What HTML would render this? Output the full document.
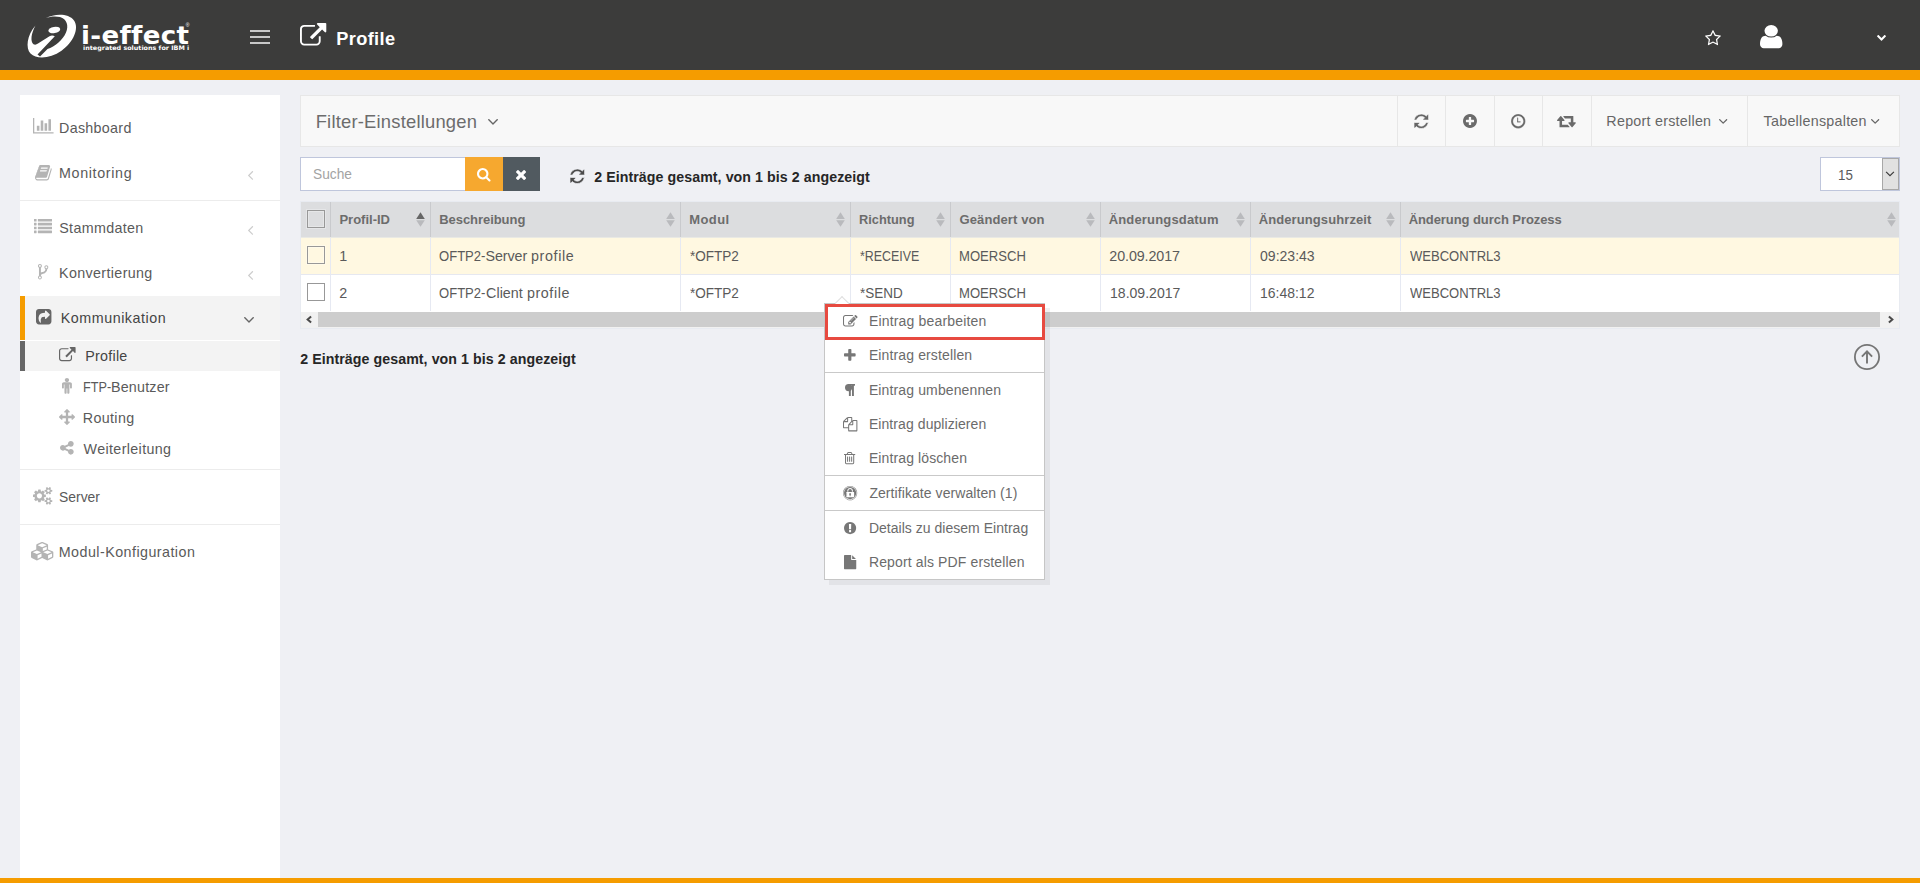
<!DOCTYPE html>
<html lang="de">
<head>
<meta charset="utf-8">
<title>i-effect - Profile</title>
<style>
*{box-sizing:border-box;margin:0;padding:0}
html,body{width:1920px;height:883px;overflow:hidden}
body{background:#eff0f4;font-family:"Liberation Sans",Arial,sans-serif;font-size:14.6px;color:#595959;position:relative;line-height:1}
.abs{position:absolute}
svg.ic{display:block;position:absolute;overflow:visible}
.t{position:absolute;white-space:nowrap;line-height:20px}
.sg{display:inline-block;white-space:pre;vertical-align:top}
.nav{font-size:14.3px;color:#5a5a5a}
.navd{font-size:14.3px;color:#444}
.title{font-size:18.2px;font-weight:bold;color:#fff}
.ft{font-size:18.4px;color:#6c6c6c}
.bt{font-size:14.3px;color:#666}
.ph{font-size:14.3px;color:#a3a3a3}
.cnt{font-size:14.2px;font-weight:bold;color:#262626}
.th{font-size:13px;font-weight:bold;color:#6c6c6c}
.td{font-size:14.3px;color:#5a5a5a}
.mi{font-size:14px;color:#6b6b6b}

/* ---------- header ---------- */
#top{position:absolute;left:0;top:0;width:1920px;height:70px;background:#3c3c3b}
#topbar{position:absolute;left:0;top:70px;width:1920px;height:10px;background:#f59c00}
#bottombar{position:absolute;left:0;top:878px;width:1920px;height:5px;background:#f59c00}
#burger i{position:absolute;left:250px;width:20px;height:2px;background:#c8c8c8;display:block}
#logotext{line-height:1;left:81.4px;top:23.8px;font-family:"DejaVu Sans","Liberation Sans",sans-serif;font-size:24.6px;font-weight:bold;color:#fff;transform-origin:0 0;transform:scaleX(1.06);letter-spacing:.3px}
#logosub{line-height:1;left:82.8px;top:45.1px;font-family:"DejaVu Sans","Liberation Sans",sans-serif;font-size:6.1px;font-weight:bold;color:#fff;transform-origin:0 0;transform:scaleX(1.05)}

/* ---------- sidebar ---------- */
#side{position:absolute;left:20px;top:95px;width:260px;height:783px;background:#fff}
.sep{position:absolute;left:20px;width:260px;height:1px;background:#ececec}
#act1{position:absolute;left:20px;top:296px;width:260px;height:44px;background:#f3f3f3;border-left:5px solid #f59c00}
#act2{position:absolute;left:20px;top:341px;width:260px;height:30px;background:#f3f3f3;border-left:5px solid #666}

/* ---------- toolbar ---------- */
#panel{position:absolute;left:300px;top:95px;width:1600px;height:52px;background:#f8f8f8;border:1px solid #e7e7e7}
.vsep{position:absolute;top:96px;width:1px;height:50px;background:#e7e7e7}

#search{position:absolute;left:300px;top:157px;width:166px;height:34px;background:#fff;border:1px solid #bfc6dc}
#sbtn{position:absolute;left:465px;top:157px;width:38px;height:34px;background:#f6a82f}
#xbtn{position:absolute;left:503px;top:157px;width:37px;height:34px;background:#515a60}
#sel{position:absolute;left:1820px;top:157px;width:80px;height:34px;background:#fff;border:1px solid #bfc6dc}
#selbtn{position:absolute;left:1882px;top:158px;width:17px;height:32px;background:#e1e1e1;border:1px solid #a8a8a8}
/* ---------- table ---------- */
#tblwrap{position:absolute;left:300px;top:201px;width:1600px;height:128px;border:1px solid #e8ebf1}
#thead{position:absolute;left:301px;top:202px;width:1598px;height:35px;background:#dcdddf}
#row1{position:absolute;left:301px;top:238px;width:1598px;height:36px;background:#fff8e1}
#row2{position:absolute;left:301px;top:275px;width:1598px;height:37px;background:#fff}
.hl{position:absolute;left:301px;width:1598px;height:1px;background:#e6e8f0}
.cl{position:absolute;top:202px;width:1px;height:35px;background:#c9cacd}
.cl2{position:absolute;top:238px;width:1px;height:73px;background:#e6e9f2}
.cb{position:absolute;left:307px;width:18px;height:18px;border:1px solid #989898;background:transparent;box-shadow:0 0 0 1px rgba(255,255,255,.28),inset 0 0 0 1px rgba(255,255,255,.3)}
.srt{position:absolute;top:213px;width:9px;height:14px}
#hscroll{position:absolute;left:301px;top:312px;width:1598px;height:16px;background:#f1f1f1}
#hthumb{position:absolute;left:318px;top:312px;width:1562px;height:15px;background:#cdcdcd}

/* ---------- context menu ---------- */
#menu{position:absolute;left:824px;top:303px;width:221px;height:277px;background:#fff;border:1px solid #c6c6c6;box-shadow:5px 5px 0 rgba(40,40,60,.065)}
#menusel{position:absolute;left:825px;top:304px;width:220px;height:36px;border:3px solid #e74a40;background:#fff}
.msep{position:absolute;left:825px;width:219px;height:1px;background:#c9c9c9}
#caret{position:absolute;left:836.8px;top:297.6px;width:10px;height:10px;background:#fff;border-left:1.3px solid #dedede;border-top:1.3px solid #dedede;transform:rotate(45deg)}
</style>
</head>
<body>
<!-- ================= HEADER ================= -->
<div id="top"></div>
<div id="topbar"></div>
<div id="bottombar"></div>
<svg class="abs" style="left:24px;top:12px" width="56" height="48" viewBox="0 0 56 48" aria-hidden="true">
  <path fill="#fff" d="M21.5 6.2 C31 1.5 44.5 1.2 50 8.5 C55.5 16.5 49.5 30 37.5 38.8 C26.5 46.5 13 48 6.5 41.5 C1.5 36 2.8 23.5 11.5 13.5 C7 21.5 6.2 29.5 9.5 32.2 C11 33 12.5 32.6 14 31.6 L25.5 24.2 C27.5 23 29.5 23.5 30.8 24.2 L13.5 42.5 L16 44.5 L23.5 37 C31 34.5 38.5 28.5 42 20.5 C45 13.5 42.8 7 36 5 C31.5 3.8 26 4.4 21.5 6.2 Z"/>
  <ellipse cx="30.3" cy="18" rx="6" ry="3.1" fill="#fff" transform="rotate(-10 30.3 18)"/>
</svg>
<div class="t" id="logotext">i-effect</div>
<div class="t" id="logosub">integrated solutions for IBM i</div>
<div class="t" style="line-height:1;left:185.8px;top:22.9px;font-size:5px;color:#fff">®</div>
<div id="burger"><i style="top:30px"></i><i style="top:36px"></i><i style="top:42px"></i></div>
<svg class="ic" style="left:299.9px;top:22.5px" width="26.3" height="22.54" viewBox="0 -1536 1792 1536" aria-hidden="true"><path fill="#fff" transform="scale(1,-1)" d="M1408 608v-320q0 -119 -84.5 -203.5t-203.5 -84.5h-832q-119 0 -203.5 84.5t-84.5 203.5v832q0 119 84.5 203.5t203.5 84.5h704q14 0 23 -9t9 -23v-64q0 -14 -9 -23t-23 -9h-704q-66 0 -113 -47t-47 -113v-832q0 -66 47 -113t113 -47h832q66 0 113 47t47 113v320 q0 14 9 23t23 9h64q14 0 23 -9t9 -23zM1792 1472v-512q0 -26 -19 -45t-45 -19t-45 19l-176 176l-652 -652q-10 -10 -23 -10t-23 10l-114 114q-10 10 -10 23t10 23l652 652l-176 176q-19 19 -19 45t19 45t45 19h512q26 0 45 -19t19 -45z"/></svg>
<div class="t title" style="left:336.35px;top:29px;letter-spacing:0.342px">Profile</div>
<svg class="ic" style="left:1705px;top:30px" width="15.97" height="15.23" viewBox="0 -1504 1664 1587" aria-hidden="true"><path fill="#fff" transform="scale(1,-1)" d="M1137 532l306 297l-422 62l-189 382l-189 -382l-422 -62l306 -297l-73 -421l378 199l377 -199zM1664 889q0 -22 -26 -48l-363 -354l86 -500q1 -7 1 -20q0 -50 -41 -50q-19 0 -40 12l-449 236l-449 -236q-22 -12 -40 -12q-21 0 -31.5 14.5t-10.5 35.5q0 6 2 20l86 500 l-364 354q-25 27 -25 48q0 37 56 46l502 73l225 455q19 41 49 41t49 -41l225 -455l502 -73q56 -9 56 -46z"/></svg>
<svg class="ic" style="left:1760.2px;top:25px" width="22.4" height="23.2" preserveAspectRatio="none" viewBox="0 -1408 1280 1536" aria-hidden="true"><path fill="#fff" transform="scale(1,-1)" d="M1280 137q0 -109 -62.5 -187t-150.5 -78h-854q-88 0 -150.5 78t-62.5 187q0 85 8.5 160.5t31.5 152t58.5 131t94 89t134.5 34.5q131 -128 313 -128t313 128q76 0 134.5 -34.5t94 -89t58.5 -131t31.5 -152t8.5 -160.5zM1024 1024q0 -159 -112.5 -271.5t-271.5 -112.5 t-271.5 112.5t-112.5 271.5t112.5 271.5t271.5 112.5t271.5 -112.5t112.5 -271.5z"/></svg>
<svg class="ic" style="left:1876.8px;top:34.8px" width="9" height="5.78" viewBox="90 -1003 1612 1035" aria-hidden="true"><path fill="#fff" transform="scale(1,-1)" d="M1683 728l-742 -741q-19 -19 -45 -19t-45 19l-742 741q-19 19 -19 45.5t19 45.5l166 165q19 19 45 19t45 -19l531 -531l531 531q19 19 45 19t45 -19l166 -165q19 -19 19 -45.5t-19 -45.5z"/></svg>

<!-- ================= SIDEBAR ================= -->
<div id="side"></div>
<div class="sep" style="top:200px"></div>
<div class="sep" style="top:469px"></div>
<div class="sep" style="top:524px"></div>
<div id="act1"></div>
<div id="act2"></div>

<svg class="ic" style="left:32.9px;top:118.3px" width="20.57" height="15.43" viewBox="0 -1408 2048 1536" aria-hidden="true"><path fill="#b4b4b4" transform="scale(1,-1)" d="M640 640v-512h-256v512h256zM1024 1152v-1024h-256v1024h256zM2048 0v-128h-2048v1536h128v-1408h1920zM1408 896v-768h-256v768h256zM1792 1280v-1152h-256v1152h256z"/></svg>
<div class="t nav" style="left:59.05px;top:118px;letter-spacing:0.294px">Dashboard</div>
<svg class="ic" style="left:35px;top:165px" width="16.73" height="15.43" viewBox="-0.52 -1408 1665.33 1536" aria-hidden="true"><path fill="#b4b4b4" transform="scale(1,-1)" d="M1639 1058q40 -57 18 -129l-275 -906q-19 -64 -76.5 -107.5t-122.5 -43.5h-923q-77 0 -148.5 53.5t-99.5 131.5q-24 67 -2 127q0 4 3 27t4 37q1 8 -3 21.5t-3 19.5q2 11 8 21t16.5 23.5t16.5 23.5q23 38 45 91.5t30 91.5q3 10 0.5 30t-0.5 28q3 11 17 28t17 23 q21 36 42 92t25 90q1 9 -2.5 32t0.5 28q4 13 22 30.5t22 22.5q19 26 42.5 84.5t27.5 96.5q1 8 -3 25.5t-2 26.5q2 8 9 18t18 23t17 21q8 12 16.5 30.5t15 35t16 36t19.5 32t26.5 23.5t36 11.5t47.5 -5.5l-1 -3q38 9 51 9h761q74 0 114 -56t18 -130l-274 -906 q-36 -119 -71.5 -153.5t-128.5 -34.5h-869q-27 0 -38 -15q-11 -16 -1 -43q24 -70 144 -70h923q29 0 56 15.5t35 41.5l300 987q7 22 5 57q38 -15 59 -43zM575 1056q-4 -13 2 -22.5t20 -9.5h608q13 0 25.5 9.5t16.5 22.5l21 64q4 13 -2 22.5t-20 9.5h-608q-13 0 -25.5 -9.5 t-16.5 -22.5zM492 800q-4 -13 2 -22.5t20 -9.5h608q13 0 25.5 9.5t16.5 22.5l21 64q4 13 -2 22.5t-20 9.5h-608q-13 0 -25.5 -9.5t-16.5 -22.5z"/></svg>
<div class="t nav" style="left:59.05px;top:163px;letter-spacing:0.644px">Monitoring</div>
<svg class="ic" style="left:248.4px;top:170.6px" width="5.2" height="8.91" viewBox="45 -1075 582 998" aria-hidden="true"><path fill="#cdcdcd" transform="scale(1,-1)" d="M627 992q0 -13 -10 -23l-393 -393l393 -393q10 -10 10 -23t-10 -23l-50 -50q-10 -10 -23 -10t-23 10l-466 466q-10 10 -10 23t10 23l466 466q10 10 23 10t23 -10l50 -50q10 -10 10 -23z"/></svg>
<svg class="ic" style="left:34px;top:219px" width="18" height="14.14" viewBox="0 -1408 1792 1408" aria-hidden="true"><path fill="#b4b4b4" transform="scale(1,-1)" d="M256 224v-192q0 -13 -9.5 -22.5t-22.5 -9.5h-192q-13 0 -22.5 9.5t-9.5 22.5v192q0 13 9.5 22.5t22.5 9.5h192q13 0 22.5 -9.5t9.5 -22.5zM256 608v-192q0 -13 -9.5 -22.5t-22.5 -9.5h-192q-13 0 -22.5 9.5t-9.5 22.5v192q0 13 9.5 22.5t22.5 9.5h192q13 0 22.5 -9.5 t9.5 -22.5zM256 992v-192q0 -13 -9.5 -22.5t-22.5 -9.5h-192q-13 0 -22.5 9.5t-9.5 22.5v192q0 13 9.5 22.5t22.5 9.5h192q13 0 22.5 -9.5t9.5 -22.5zM1792 224v-192q0 -13 -9.5 -22.5t-22.5 -9.5h-1344q-13 0 -22.5 9.5t-9.5 22.5v192q0 13 9.5 22.5t22.5 9.5h1344 q13 0 22.5 -9.5t9.5 -22.5zM256 1376v-192q0 -13 -9.5 -22.5t-22.5 -9.5h-192q-13 0 -22.5 9.5t-9.5 22.5v192q0 13 9.5 22.5t22.5 9.5h192q13 0 22.5 -9.5t9.5 -22.5zM1792 608v-192q0 -13 -9.5 -22.5t-22.5 -9.5h-1344q-13 0 -22.5 9.5t-9.5 22.5v192q0 13 9.5 22.5 t22.5 9.5h1344q13 0 22.5 -9.5t9.5 -22.5zM1792 992v-192q0 -13 -9.5 -22.5t-22.5 -9.5h-1344q-13 0 -22.5 9.5t-9.5 22.5v192q0 13 9.5 22.5t22.5 9.5h1344q13 0 22.5 -9.5t9.5 -22.5zM1792 1376v-192q0 -13 -9.5 -22.5t-22.5 -9.5h-1344q-13 0 -22.5 9.5t-9.5 22.5v192 q0 13 9.5 22.5t22.5 9.5h1344q13 0 22.5 -9.5t9.5 -22.5z"/></svg>
<div class="t nav" style="left:59.25px;top:218px;letter-spacing:0.322px">Stammdaten</div>
<svg class="ic" style="left:248.4px;top:225.7px" width="5.2" height="8.91" viewBox="45 -1075 582 998" aria-hidden="true"><path fill="#cdcdcd" transform="scale(1,-1)" d="M627 992q0 -13 -10 -23l-393 -393l393 -393q10 -10 10 -23t-10 -23l-50 -50q-10 -10 -23 -10t-23 10l-466 466q-10 10 -10 23t10 23l466 466q10 10 23 10t23 -10l50 -50q10 -10 10 -23z"/></svg>
<svg class="ic" style="left:38px;top:264px" width="10.29" height="15.43" viewBox="0 -1408 1024 1536" aria-hidden="true"><path fill="#b4b4b4" transform="scale(1,-1)" d="M288 64q0 40 -28 68t-68 28t-68 -28t-28 -68t28 -68t68 -28t68 28t28 68zM288 1216q0 40 -28 68t-68 28t-68 -28t-28 -68t28 -68t68 -28t68 28t28 68zM928 1088q0 40 -28 68t-68 28t-68 -28t-28 -68t28 -68t68 -28t68 28t28 68zM1024 1088q0 -52 -26 -96.5t-70 -69.5 q-2 -287 -226 -414q-67 -38 -203 -81q-128 -40 -169.5 -71t-41.5 -100v-26q44 -25 70 -69.5t26 -96.5q0 -80 -56 -136t-136 -56t-136 56t-56 136q0 52 26 96.5t70 69.5v820q-44 25 -70 69.5t-26 96.5q0 80 56 136t136 56t136 -56t56 -136q0 -52 -26 -96.5t-70 -69.5v-497 q54 26 154 57q55 17 87.5 29.5t70.5 31t59 39.5t40.5 51t28 69.5t8.5 91.5q-44 25 -70 69.5t-26 96.5q0 80 56 136t136 56t136 -56t56 -136z"/></svg>
<div class="t nav" style="left:59.05px;top:263px;letter-spacing:0.354px">Konvertierung</div>
<svg class="ic" style="left:248.4px;top:270.8px" width="5.2" height="8.91" viewBox="45 -1075 582 998" aria-hidden="true"><path fill="#cdcdcd" transform="scale(1,-1)" d="M627 992q0 -13 -10 -23l-393 -393l393 -393q10 -10 10 -23t-10 -23l-50 -50q-10 -10 -23 -10t-23 10l-466 466q-10 10 -10 23t10 23l466 466q10 10 23 10t23 -10l50 -50q10 -10 10 -23z"/></svg>
<svg class="ic" style="left:36px;top:308.8px" width="15.43" height="15.43" viewBox="0 -1408 1536 1536" aria-hidden="true"><path fill="#666" transform="scale(1,-1)" d="M1005 435l352 352q19 19 19 45t-19 45l-352 352q-30 31 -69 14q-40 -17 -40 -59v-160q-119 0 -216 -19.5t-162.5 -51t-114 -79t-76.5 -95.5t-44.5 -109t-21.5 -111.5t-5 -110.5q0 -181 167 -404q11 -12 25 -12q7 0 13 3q22 9 19 33q-44 354 62 473q46 52 130 75.5 t224 23.5v-160q0 -42 40 -59q12 -5 24 -5q26 0 45 19zM1536 1120v-960q0 -119 -84.5 -203.5t-203.5 -84.5h-960q-119 0 -203.5 84.5t-84.5 203.5v960q0 119 84.5 203.5t203.5 84.5h960q119 0 203.5 -84.5t84.5 -203.5z"/></svg>
<div class="t navd" style="left:60.75px;top:308px;letter-spacing:0.529px">Kommunikation</div>
<svg class="ic" style="left:244.4px;top:316.9px" width="10.02" height="5.85" viewBox="77 -883 998 582" aria-hidden="true"><path fill="#666" transform="scale(1,-1)" d="M1075 800q0 -13 -10 -23l-466 -466q-10 -10 -23 -10t-23 10l-466 466q-10 10 -10 23t10 23l50 50q10 10 23 10t23 -10l393 -393l393 393q10 10 23 10t23 -10l50 -50q10 -10 10 -23z"/></svg>

<svg class="ic" style="left:58.9px;top:347.2px" width="16.6" height="14.23" viewBox="0 -1536 1792 1536" aria-hidden="true"><path fill="#666" transform="scale(1,-1)" d="M1408 608v-320q0 -119 -84.5 -203.5t-203.5 -84.5h-832q-119 0 -203.5 84.5t-84.5 203.5v832q0 119 84.5 203.5t203.5 84.5h704q14 0 23 -9t9 -23v-64q0 -14 -9 -23t-23 -9h-704q-66 0 -113 -47t-47 -113v-832q0 -66 47 -113t113 -47h832q66 0 113 47t47 113v320 q0 14 9 23t23 9h64q14 0 23 -9t9 -23zM1792 1472v-512q0 -26 -19 -45t-45 -19t-45 19l-176 176l-652 -652q-10 -10 -23 -10t-23 10l-114 114q-10 10 -10 23t10 23l652 652l-176 176q-19 19 -19 45t19 45t45 19h512q26 0 45 -19t19 -45z"/></svg>
<div class="t navd" style="left:85.25px;top:345.7px;letter-spacing:0.258px">Profile</div>
<svg class="ic" style="left:62.1px;top:378.4px" width="9.9" height="15.7" preserveAspectRatio="none" viewBox="0 -1504 1024 1760" aria-hidden="true"><path fill="#b4b4b4" transform="scale(1,-1)" d="M1024 832v-416q0 -40 -28 -68t-68 -28t-68 28t-28 68v352h-64v-912q0 -46 -33 -79t-79 -33t-79 33t-33 79v464h-64v-464q0 -46 -33 -79t-79 -33t-79 33t-33 79v912h-64v-352q0 -40 -28 -68t-68 -28t-68 28t-28 68v416q0 80 56 136t136 56h640q80 0 136 -56t56 -136z M736 1280q0 -93 -65.5 -158.5t-158.5 -65.5t-158.5 65.5t-65.5 158.5t65.5 158.5t158.5 65.5t158.5 -65.5t65.5 -158.5z"/></svg>
<div class="t nav" style="left:82.89px;top:377px"><span class="sg" style="width:28.06px;transform:scaleX(0.8867);transform-origin:0 50%">FTP-</span><span class="sg" style="letter-spacing:0.207px">Benutzer</span></div>
<svg class="ic" style="left:58.6px;top:409.2px" width="16" height="16" viewBox="0 -1536 1792 1792" aria-hidden="true"><path fill="#b4b4b4" transform="scale(1,-1)" d="M1792 640q0 -26 -19 -45l-256 -256q-19 -19 -45 -19t-45 19t-19 45v128h-384v-384h128q26 0 45 -19t19 -45t-19 -45l-256 -256q-19 -19 -45 -19t-45 19l-256 256q-19 19 -19 45t19 45t45 19h128v384h-384v-128q0 -26 -19 -45t-45 -19t-45 19l-256 256q-19 19 -19 45 t19 45l256 256q19 19 45 19t45 -19t19 -45v-128h384v384h-128q-26 0 -45 19t-19 45t19 45l256 256q19 19 45 19t45 -19l256 -256q19 -19 19 -45t-19 -45t-45 -19h-128v-384h384v128q0 26 19 45t45 19t45 -19l256 -256q19 -19 19 -45z"/></svg>
<div class="t nav" style="left:82.75px;top:408px;letter-spacing:0.350px">Routing</div>
<svg class="ic" style="left:59.8px;top:441.3px" width="13.71" height="13.71" viewBox="0 -1408 1536 1536" aria-hidden="true"><path fill="#b4b4b4" transform="scale(1,-1)" d="M1216 512q133 0 226.5 -93.5t93.5 -226.5t-93.5 -226.5t-226.5 -93.5t-226.5 93.5t-93.5 226.5q0 12 2 34l-360 180q-92 -86 -218 -86q-133 0 -226.5 93.5t-93.5 226.5t93.5 226.5t226.5 93.5q126 0 218 -86l360 180q-2 22 -2 34q0 133 93.5 226.5t226.5 93.5 t226.5 -93.5t93.5 -226.5t-93.5 -226.5t-226.5 -93.5q-126 0 -218 86l-360 -180q2 -22 2 -34t-2 -34l360 -180q92 86 218 86z"/></svg>
<div class="t nav" style="left:83.6px;top:439px;letter-spacing:0.354px">Weiterleitung</div>

<svg class="ic" style="left:33px;top:486.8px" width="19.29" height="17.69" viewBox="0 -1520 1920 1761" aria-hidden="true"><path fill="#b4b4b4" transform="scale(1,-1)" d="M896 640q0 106 -75 181t-181 75t-181 -75t-75 -181t75 -181t181 -75t181 75t75 181zM1664 128q0 52 -38 90t-90 38t-90 -38t-38 -90q0 -53 37.5 -90.5t90.5 -37.5t90.5 37.5t37.5 90.5zM1664 1152q0 52 -38 90t-90 38t-90 -38t-38 -90q0 -53 37.5 -90.5t90.5 -37.5 t90.5 37.5t37.5 90.5zM1280 731v-185q0 -10 -7 -19.5t-16 -10.5l-155 -24q-11 -35 -32 -76q34 -48 90 -115q7 -11 7 -20q0 -12 -7 -19q-23 -30 -82.5 -89.5t-78.5 -59.5q-11 0 -21 7l-115 90q-37 -19 -77 -31q-11 -108 -23 -155q-7 -24 -30 -24h-186q-11 0 -20 7.5t-10 17.5 l-23 153q-34 10 -75 31l-118 -89q-7 -7 -20 -7q-11 0 -21 8q-144 133 -144 160q0 9 7 19q10 14 41 53t47 61q-23 44 -35 82l-152 24q-10 1 -17 9.5t-7 19.5v185q0 10 7 19.5t16 10.5l155 24q11 35 32 76q-34 48 -90 115q-7 11 -7 20q0 12 7 20q22 30 82 89t79 59q11 0 21 -7 l115 -90q34 18 77 32q11 108 23 154q7 24 30 24h186q11 0 20 -7.5t10 -17.5l23 -153q34 -10 75 -31l118 89q8 7 20 7q11 0 21 -8q144 -133 144 -160q0 -8 -7 -19q-12 -16 -42 -54t-45 -60q23 -48 34 -82l152 -23q10 -2 17 -10.5t7 -19.5zM1920 198v-140q0 -16 -149 -31 q-12 -27 -30 -52q51 -113 51 -138q0 -4 -4 -7q-122 -71 -124 -71q-8 0 -46 47t-52 68q-20 -2 -30 -2t-30 2q-14 -21 -52 -68t-46 -47q-2 0 -124 71q-4 3 -4 7q0 25 51 138q-18 25 -30 52q-149 15 -149 31v140q0 16 149 31q13 29 30 52q-51 113 -51 138q0 4 4 7q4 2 35 20 t59 34t30 16q8 0 46 -46.5t52 -67.5q20 2 30 2t30 -2q51 71 92 112l6 2q4 0 124 -70q4 -3 4 -7q0 -25 -51 -138q17 -23 30 -52q149 -15 149 -31zM1920 1222v-140q0 -16 -149 -31q-12 -27 -30 -52q51 -113 51 -138q0 -4 -4 -7q-122 -71 -124 -71q-8 0 -46 47t-52 68 q-20 -2 -30 -2t-30 2q-14 -21 -52 -68t-46 -47q-2 0 -124 71q-4 3 -4 7q0 25 51 138q-18 25 -30 52q-149 15 -149 31v140q0 16 149 31q13 29 30 52q-51 113 -51 138q0 4 4 7q4 2 35 20t59 34t30 16q8 0 46 -46.5t52 -67.5q20 2 30 2t30 -2q51 71 92 112l6 2q4 0 124 -70 q4 -3 4 -7q0 -25 -51 -138q17 -23 30 -52q149 -15 149 -31z"/></svg>
<div class="t nav" style="left:59.27px;top:487px;transform:scaleX(0.9721);transform-origin:0 50%">Server</div>
<svg class="ic" style="left:31.3px;top:541.8px" width="22.34" height="18.4" viewBox="0 -1536 2176 1792" aria-hidden="true"><path fill="#b4b4b4" transform="scale(1,-1)" d="M640 -96l384 192v314l-384 -164v-342zM576 358l404 173l-404 173l-404 -173zM1664 -96l384 192v314l-384 -164v-342zM1600 358l404 173l-404 173l-404 -173zM1152 651l384 165v266l-384 -164v-267zM1088 1030l441 189l-441 189l-441 -189zM2176 512v-416q0 -36 -19 -67 t-52 -47l-448 -224q-25 -14 -57 -14t-57 14l-448 224q-4 2 -7 4q-2 -2 -7 -4l-448 -224q-25 -14 -57 -14t-57 14l-448 224q-33 16 -52 47t-19 67v416q0 38 21.5 70t56.5 48l434 186v400q0 38 21.5 70t56.5 48l448 192q23 10 50 10t50 -10l448 -192q35 -16 56.5 -48t21.5 -70 v-400l434 -186q36 -16 57 -48t21 -70z"/></svg>
<div class="t nav" style="left:58.75px;top:542px;letter-spacing:0.453px">Modul-Konfiguration</div>
<!-- ================= TOOLBAR ================= -->
<div id="panel"></div>
<div class="t ft" style="left:315.7px;top:111.6px;letter-spacing:0.203px">Filter-Einstellungen</div>
<svg class="ic" style="left:487.8px;top:119.1px" width="10.02" height="5.85" viewBox="77 -883 998 582" aria-hidden="true"><path fill="#666" transform="scale(1,-1)" d="M1075 800q0 -13 -10 -23l-466 -466q-10 -10 -23 -10t-23 10l-466 466q-10 10 -10 23t10 23l50 50q10 10 23 10t23 -10l393 -393l393 393q10 10 23 10t23 -10l50 -50q10 -10 10 -23z"/></svg>
<div class="vsep" style="left:1397px"></div>
<div class="vsep" style="left:1445px"></div>
<div class="vsep" style="left:1494px"></div>
<div class="vsep" style="left:1542px"></div>
<div class="vsep" style="left:1591px"></div>
<div class="vsep" style="left:1747px"></div>
<svg class="ic" style="left:1414px;top:113.6px" width="14.57" height="14.57" viewBox="0 -1408 1536 1536" aria-hidden="true"><path fill="#666" stroke="#f8f8f8" stroke-width="70" stroke-linejoin="miter" transform="scale(1,-1)" d="M1511 480q0 -5 -1 -7q-64 -268 -268 -434.5t-478 -166.5q-146 0 -282.5 55t-243.5 157l-129 -129q-19 -19 -45 -19t-45 19t-19 45v448q0 26 19 45t45 19h448q26 0 45 -19t19 -45t-19 -45l-137 -137q71 -66 161 -102t187 -36q134 0 250 65t186 179q11 17 53 117 q8 23 30 23h192q13 0 22.5 -9.5t9.5 -22.5zM1536 1280v-448q0 -26 -19 -45t-45 -19h-448q-26 0 -45 19t-19 45t19 45l138 138q-148 137 -349 137q-134 0 -250 -65t-186 -179q-11 -17 -53 -117q-8 -23 -30 -23h-199q-13 0 -22.5 9.5t-9.5 22.5v7q65 268 270 434.5t480 166.5 q146 0 284 -55.5t245 -156.5l130 129q19 19 45 19t45 -19t19 -45z"/></svg>
<svg class="ic" style="left:1463px;top:113.9px" width="13.97" height="13.97" viewBox="0 -1408 1536 1536" aria-hidden="true"><path fill="#6b6b6b" transform="scale(1,-1)" d="M1216 576v128q0 26 -19 45t-45 19h-256v256q0 26 -19 45t-45 19h-128q-26 0 -45 -19t-19 -45v-256h-256q-26 0 -45 -19t-19 -45v-128q0 -26 19 -45t45 -19h256v-256q0 -26 19 -45t45 -19h128q26 0 45 19t19 45v256h256q26 0 45 19t19 45zM1536 640q0 -209 -103 -385.5 t-279.5 -279.5t-385.5 -103t-385.5 103t-279.5 279.5t-103 385.5t103 385.5t279.5 279.5t385.5 103t385.5 -103t279.5 -279.5t103 -385.5z"/></svg>
<svg class="ic" style="left:1511.1px;top:113.7px" width="14.4" height="14.4" viewBox="0 -1408 1536 1536" aria-hidden="true"><path fill="#666" stroke="#f8f8f8" stroke-width="28" stroke-linejoin="miter" transform="translate(1536,0) scale(-1,-1)" d="M896 992v-448q0 -14 -9 -23t-23 -9h-320q-14 0 -23 9t-9 23v64q0 14 9 23t23 9h224v352q0 14 9 23t23 9h64q14 0 23 -9t9 -23zM1312 640q0 148 -73 273t-198 198t-273 73t-273 -73t-198 -198t-73 -273t73 -273t198 -198t273 -73t273 73t198 198t73 273zM1536 640 q0 -209 -103 -385.5t-279.5 -279.5t-385.5 -103t-385.5 103t-279.5 279.5t-103 385.5t103 385.5t279.5 279.5t385.5 103t385.5 -103t279.5 -279.5t103 -385.5z"/></svg>
<svg class="ic" style="left:1557.4px;top:115.8px" width="18.86" height="11.31" viewBox="0 -1152 1920 1152" aria-hidden="true"><path fill="#6b6b6b" transform="scale(1,-1)" d="M1280 32q0 -13 -9.5 -22.5t-22.5 -9.5h-960q-8 0 -13.5 2t-9 7t-5.5 8t-3 11.5t-1 11.5v13v11v160v416h-192q-26 0 -45 19t-19 45q0 24 15 41l320 384q19 22 49 22t49 -22l320 -384q15 -17 15 -41q0 -26 -19 -45t-45 -19h-192v-384h576q16 0 25 -11l160 -192q7 -10 7 -21 zM1920 448q0 -24 -15 -41l-320 -384q-20 -23 -49 -23t-49 23l-320 384q-15 17 -15 41q0 26 19 45t45 19h192v384h-576q-16 0 -25 12l-160 192q-7 9 -7 20q0 13 9.5 22.5t22.5 9.5h960q8 0 13.5 -2t9 -7t5.5 -8t3 -11.5t1 -11.5v-13v-11v-160v-416h192q26 0 45 -19t19 -45z"/></svg>
<div class="t bt" style="left:1606.35px;top:111.2px;letter-spacing:0.253px">Report erstellen</div>
<svg class="ic" style="left:1719.3px;top:118.9px" width="8.35" height="4.87" viewBox="77 -883 998 582" aria-hidden="true"><path fill="#666" transform="scale(1,-1)" d="M1075 800q0 -13 -10 -23l-466 -466q-10 -10 -23 -10t-23 10l-466 466q-10 10 -10 23t10 23l50 50q10 10 23 10t23 -10l393 -393l393 393q10 10 23 10t23 -10l50 -50q10 -10 10 -23z"/></svg>
<div class="t bt" style="left:1763.6px;top:111.2px;letter-spacing:0.254px">Tabellenspalten</div>
<svg class="ic" style="left:1871.3px;top:118.9px" width="8.35" height="4.87" viewBox="77 -883 998 582" aria-hidden="true"><path fill="#666" transform="scale(1,-1)" d="M1075 800q0 -13 -10 -23l-466 -466q-10 -10 -23 -10t-23 10l-466 466q-10 10 -10 23t10 23l50 50q10 10 23 10t23 -10l393 -393l393 393q10 10 23 10t23 -10l50 -50q10 -10 10 -23z"/></svg>

<div id="search"></div>
<div class="t ph" style="left:312.98px;top:164px;transform:scaleX(0.9605);transform-origin:0 50%">Suche</div>
<div id="sbtn"></div>
<div id="xbtn"></div>
<svg class="ic" style="left:477.4px;top:167.8px" width="13.56" height="13.56" viewBox="0 -1408 1664 1664" aria-hidden="true"><path fill="#fff" transform="scale(1,-1)" d="M1152 704q0 185 -131.5 316.5t-316.5 131.5t-316.5 -131.5t-131.5 -316.5t131.5 -316.5t316.5 -131.5t316.5 131.5t131.5 316.5zM1664 -128q0 -52 -38 -90t-90 -38q-54 0 -90 38l-343 342q-179 -124 -399 -124q-143 0 -273.5 55.5t-225 150t-150 225t-55.5 273.5 t55.5 273.5t150 225t225 150t273.5 55.5t273.5 -55.5t225 -150t150 -225t55.5 -273.5q0 -220 -124 -399l343 -343q37 -37 37 -90z"/></svg>
<svg class="ic" style="left:516.2px;top:169.5px" width="10.08" height="10.08" viewBox="110 -1170 1188 1188" aria-hidden="true"><path fill="#fff" transform="scale(1,-1)" d="M1298 214q0 -40 -28 -68l-136 -136q-28 -28 -68 -28t-68 28l-294 294l-294 -294q-28 -28 -68 -28t-68 28l-136 136q-28 28 -28 68t28 68l294 294l-294 294q-28 28 -28 68t28 68l136 136q28 28 68 28t68 -28l294 -294l294 294q28 28 68 28t68 -28l136 -136q28 -28 28 -68 t-28 -68l-294 -294l294 -294q28 -28 28 -68z"/></svg>
<svg class="ic" style="left:569.9px;top:168.5px" width="14.57" height="14.57" viewBox="0 -1408 1536 1536" aria-hidden="true"><path fill="#4a4a4a" stroke="#eff0f4" stroke-width="70" stroke-linejoin="miter" transform="scale(1,-1)" d="M1511 480q0 -5 -1 -7q-64 -268 -268 -434.5t-478 -166.5q-146 0 -282.5 55t-243.5 157l-129 -129q-19 -19 -45 -19t-45 19t-19 45v448q0 26 19 45t45 19h448q26 0 45 -19t19 -45t-19 -45l-137 -137q71 -66 161 -102t187 -36q134 0 250 65t186 179q11 17 53 117 q8 23 30 23h192q13 0 22.5 -9.5t9.5 -22.5zM1536 1280v-448q0 -26 -19 -45t-45 -19h-448q-26 0 -45 19t-19 45t19 45l138 138q-148 137 -349 137q-134 0 -250 -65t-186 -179q-11 -17 -53 -117q-8 -23 -30 -23h-199q-13 0 -22.5 9.5t-9.5 22.5v7q65 268 270 434.5t480 166.5 q146 0 284 -55.5t245 -156.5l130 129q19 19 45 19t45 -19t19 -45z"/></svg>
<div class="t cnt" style="left:594.2px;top:167.2px;letter-spacing:0.071px">2 Einträge gesamt, von 1 bis 2 angezeigt</div>
<div id="sel"></div>
<div class="t td" style="left:1837.67px;top:165px;transform:scaleX(0.9333);transform-origin:0 50%">15</div>
<div id="selbtn"></div>
<svg class="abs" style="left:1885px;top:170px" width="10" height="7" viewBox="0 0 10 7" aria-hidden="true"><path d="M1.1 1.8 L5 5.6 L8.9 1.8" fill="none" stroke="#3a3a3a" stroke-width="1.15"/></svg>

<!-- ================= TABLE ================= -->
<div id="tblwrap"></div>
<div id="thead"></div>
<div id="row1"></div>
<div id="row2"></div>
<div class="hl" style="top:237px;background:#e9e9e4"></div>
<div class="hl" style="top:274px"></div>
<div class="cl" style="left:330px"></div><div class="cl" style="left:430px"></div><div class="cl" style="left:680px"></div><div class="cl" style="left:850px"></div><div class="cl" style="left:950px"></div><div class="cl" style="left:1100px"></div><div class="cl" style="left:1250px"></div><div class="cl" style="left:1400px"></div>
<div class="cl2" style="left:330px"></div><div class="cl2" style="left:430px"></div><div class="cl2" style="left:680px"></div><div class="cl2" style="left:850px"></div><div class="cl2" style="left:950px"></div><div class="cl2" style="left:1100px"></div><div class="cl2" style="left:1250px"></div><div class="cl2" style="left:1400px"></div>
<div class="cb" style="top:210px;background:#dcdddf"></div>
<div class="cb" style="top:246px"></div>
<div class="cb" style="top:283px"></div>

<div class="t th" style="left:339.45px;top:209.5px;letter-spacing:-0.006px">Profil-ID</div>
<div class="t th" style="left:439.25px;top:209.5px;letter-spacing:-0.055px">Beschreibung</div>
<div class="t th" style="left:689.25px;top:209.5px;letter-spacing:0.412px">Modul</div>
<div class="t th" style="left:859.26px;top:209.5px;transform:scaleX(0.9845);transform-origin:0 50%">Richtung</div>
<div class="t th" style="left:959.5px;top:209.5px;letter-spacing:0.105px">Geändert von</div>
<div class="t th" style="left:1108.65px;top:209.5px;letter-spacing:0.173px">Änderungsdatum</div>
<div class="t th" style="left:1258.65px;top:209.5px;letter-spacing:0.100px">Änderungsuhrzeit</div>
<div class="t th" style="left:1408.65px;top:209.5px;letter-spacing:-0.071px">Änderung durch Prozess</div>
<svg class="ic" style="left:416px;top:211.7px" width="9" height="15" viewBox="0 0 9 15" aria-hidden="true"><path d="M4.5 0.3 L8.8 7 L0.2 7 Z" fill="#666"/><path d="M0.2 8.2 L8.8 8.2 L4.5 14.8 Z" fill="#b9babd"/></svg><svg class="ic" style="left:666px;top:211.7px" width="9" height="15" viewBox="0 0 9 15" aria-hidden="true"><path d="M4.5 0.3 L8.8 7 L0.2 7 Z" fill="#b9babd"/><path d="M0.2 8.2 L8.8 8.2 L4.5 14.8 Z" fill="#b9babd"/></svg><svg class="ic" style="left:836px;top:211.7px" width="9" height="15" viewBox="0 0 9 15" aria-hidden="true"><path d="M4.5 0.3 L8.8 7 L0.2 7 Z" fill="#b9babd"/><path d="M0.2 8.2 L8.8 8.2 L4.5 14.8 Z" fill="#b9babd"/></svg><svg class="ic" style="left:936px;top:211.7px" width="9" height="15" viewBox="0 0 9 15" aria-hidden="true"><path d="M4.5 0.3 L8.8 7 L0.2 7 Z" fill="#b9babd"/><path d="M0.2 8.2 L8.8 8.2 L4.5 14.8 Z" fill="#b9babd"/></svg><svg class="ic" style="left:1086px;top:211.7px" width="9" height="15" viewBox="0 0 9 15" aria-hidden="true"><path d="M4.5 0.3 L8.8 7 L0.2 7 Z" fill="#b9babd"/><path d="M0.2 8.2 L8.8 8.2 L4.5 14.8 Z" fill="#b9babd"/></svg><svg class="ic" style="left:1236px;top:211.7px" width="9" height="15" viewBox="0 0 9 15" aria-hidden="true"><path d="M4.5 0.3 L8.8 7 L0.2 7 Z" fill="#b9babd"/><path d="M0.2 8.2 L8.8 8.2 L4.5 14.8 Z" fill="#b9babd"/></svg><svg class="ic" style="left:1386px;top:211.7px" width="9" height="15" viewBox="0 0 9 15" aria-hidden="true"><path d="M4.5 0.3 L8.8 7 L0.2 7 Z" fill="#b9babd"/><path d="M0.2 8.2 L8.8 8.2 L4.5 14.8 Z" fill="#b9babd"/></svg><svg class="ic" style="left:1887px;top:211.7px" width="9" height="15" viewBox="0 0 9 15" aria-hidden="true"><path d="M4.5 0.3 L8.8 7 L0.2 7 Z" fill="#b9babd"/><path d="M0.2 8.2 L8.8 8.2 L4.5 14.8 Z" fill="#b9babd"/></svg>

<div class="t td" style="left:339.35px;top:246px">1</div>
<div class="t td" style="left:439.12px;top:246px"><span class="sg" style="width:46.43px;transform:scaleX(0.9131);transform-origin:0 50%">OFTP2-</span><span class="sg" style="width:45.35px;letter-spacing:-0.090px">Server </span><span class="sg" style="letter-spacing:0.658px">profile</span></div>
<div class="t td" style="left:689.86px;top:246px;transform:scaleX(0.9468);transform-origin:0 50%">*OFTP2</div>
<div class="t td" style="left:859.88px;top:246px;transform:scaleX(0.8674);transform-origin:0 50%">*RECEIVE</div>
<div class="t td" style="left:958.96px;top:246px;transform:scaleX(0.9159);transform-origin:0 50%">MOERSCH</div>
<div class="t td" style="left:1109.35px;top:246px;letter-spacing:-0.106px">20.09.2017</div>
<div class="t td" style="left:1259.61px;top:246px;transform:scaleX(0.9826);transform-origin:0 50%">09:23:43</div>
<div class="t td" style="left:1409.85px;top:246px;transform:scaleX(0.9119);transform-origin:0 50%">WEBCONTRL3</div>
<div class="t td" style="left:339.35px;top:283px">2</div>
<div class="t td" style="left:439.12px;top:283px"><span class="sg" style="width:46.93px;transform:scaleX(0.9131);transform-origin:0 50%">OFTP2-</span><span class="sg" style="width:40.85px;letter-spacing:0.050px">Client </span><span class="sg" style="letter-spacing:0.592px">profile</span></div>
<div class="t td" style="left:689.86px;top:283px;transform:scaleX(0.9468);transform-origin:0 50%">*OFTP2</div>
<div class="t td" style="left:859.86px;top:283px;transform:scaleX(0.9446);transform-origin:0 50%">*SEND</div>
<div class="t td" style="left:958.96px;top:283px;transform:scaleX(0.9159);transform-origin:0 50%">MOERSCH</div>
<div class="t td" style="left:1109.62px;top:283px;transform:scaleX(0.9829);transform-origin:0 50%">18.09.2017</div>
<div class="t td" style="left:1259.62px;top:283px;transform:scaleX(0.9778);transform-origin:0 50%">16:48:12</div>
<div class="t td" style="left:1409.85px;top:283px;transform:scaleX(0.9119);transform-origin:0 50%">WEBCONTRL3</div>

<div id="hscroll"></div>
<div id="hthumb"></div>
<svg class="abs" style="left:305px;top:315px" width="8" height="9" viewBox="0 0 8 9" aria-hidden="true"><path d="M6.1 1.4 L2.6 4.5 L6.1 7.6" fill="none" stroke="#4a4a4a" stroke-width="2"/></svg>
<svg class="abs" style="left:1887px;top:315px" width="8" height="9" viewBox="0 0 8 9" aria-hidden="true"><path d="M1.9 1.4 L5.4 4.5 L1.9 7.6" fill="none" stroke="#4a4a4a" stroke-width="2"/></svg>

<div class="t cnt" style="left:300.2px;top:349.2px;letter-spacing:0.071px">2 Einträge gesamt, von 1 bis 2 angezeigt</div>
<svg class="abs" style="left:1853px;top:343.2px" width="28" height="28" viewBox="0 0 28 28" aria-hidden="true"><circle cx="14" cy="14" r="12.1" fill="none" stroke="#757575" stroke-width="1.8"/><path d="M14 20.4 V8.6 M8.9 13.6 L14 8.3 L19.1 13.6" fill="none" stroke="#757575" stroke-width="1.9"/></svg>

<!-- ================= CONTEXT MENU ================= -->
<div id="menu"></div>
<div id="caret"></div>
<div id="menusel"></div>
<div class="msep" style="top:372px"></div>
<div class="msep" style="top:475px"></div>
<div class="msep" style="top:510px"></div>
<svg class="ic" style="left:842.6px;top:314.7px" width="14.53" height="11.47" viewBox="0 -1408 1784 1408" aria-hidden="true"><path fill="#777" transform="scale(1,-1)" d="M888 352l116 116l-152 152l-116 -116v-56h96v-96h56zM1328 1072q-16 16 -33 -1l-350 -350q-17 -17 -1 -33t33 1l350 350q17 17 1 33zM1408 478v-190q0 -119 -84.5 -203.5t-203.5 -84.5h-832q-119 0 -203.5 84.5t-84.5 203.5v832q0 119 84.5 203.5t203.5 84.5h832 q63 0 117 -25q15 -7 18 -23q3 -17 -9 -29l-49 -49q-14 -14 -32 -8q-23 6 -45 6h-832q-66 0 -113 -47t-47 -113v-832q0 -66 47 -113t113 -47h832q66 0 113 47t47 113v126q0 13 9 22l64 64q15 15 35 7t20 -29zM1312 1216l288 -288l-672 -672h-288v288zM1756 1084l-92 -92 l-288 288l92 92q28 28 68 28t68 -28l152 -152q28 -28 28 -68t-28 -68z"/></svg>
<div class="t mi" style="left:868.9px;top:311px;letter-spacing:0.171px">Eintrag bearbeiten</div>
<svg class="ic" style="left:844.1px;top:349.1px" width="11.63" height="11.63" viewBox="0 -1408 1408 1408" aria-hidden="true"><path fill="#777" transform="scale(1,-1)" d="M1408 800v-192q0 -40 -28 -68t-68 -28h-416v-416q0 -40 -28 -68t-68 -28h-192q-40 0 -68 28t-28 68v416h-416q-40 0 -68 28t-28 68v192q0 40 28 68t68 28h416v416q0 40 28 68t68 28h192q40 0 68 -28t28 -68v-416h416q40 0 68 -28t28 -68z"/></svg>
<div class="t mi" style="left:868.9px;top:345px;letter-spacing:0.128px">Eintrag erstellen</div>
<svg class="ic" style="left:845px;top:384px" width="10" height="12" viewBox="0 0 10 12" aria-hidden="true"><circle cx="3.6" cy="3.6" r="3.6" fill="#777"/><rect x="3.6" y="0" width="6.4" height="1.7" fill="#777"/><rect x="3.9" y="0" width="1.9" height="12" fill="#777"/><rect x="7" y="0" width="1.9" height="12" fill="#777"/></svg>
<div class="t mi" style="left:868.9px;top:380px;letter-spacing:0.129px">Eintrag umbenennen</div>
<svg class="ic" style="left:842.6px;top:417px" width="14.4" height="14.4" viewBox="0 -1536 1792 1792" aria-hidden="true"><path fill="#777" transform="scale(1,-1)" d="M1696 1152q40 0 68 -28t28 -68v-1216q0 -40 -28 -68t-68 -28h-960q-40 0 -68 28t-28 68v288h-544q-40 0 -68 28t-28 68v672q0 40 20 88t48 76l408 408q28 28 76 48t88 20h416q40 0 68 -28t28 -68v-328q68 40 128 40h416zM1152 939l-299 -299h299v299zM512 1323l-299 -299 h299v299zM708 676l316 316v416h-384v-416q0 -40 -28 -68t-68 -28h-416v-640h512v256q0 40 20 88t48 76zM1664 -128v1152h-384v-416q0 -40 -28 -68t-68 -28h-416v-640h896z"/></svg>
<div class="t mi" style="left:868.9px;top:414px;letter-spacing:0.078px">Eintrag duplizieren</div>
<svg class="ic" style="left:844.1px;top:451.8px" width="11.24" height="12.26" viewBox="0 -1408 1408 1536" aria-hidden="true"><path fill="#777" transform="scale(1,-1)" d="M512 800v-576q0 -14 -9 -23t-23 -9h-64q-14 0 -23 9t-9 23v576q0 14 9 23t23 9h64q14 0 23 -9t9 -23zM768 800v-576q0 -14 -9 -23t-23 -9h-64q-14 0 -23 9t-9 23v576q0 14 9 23t23 9h64q14 0 23 -9t9 -23zM1024 800v-576q0 -14 -9 -23t-23 -9h-64q-14 0 -23 9t-9 23v576 q0 14 9 23t23 9h64q14 0 23 -9t9 -23zM1152 76v948h-896v-948q0 -22 7 -40.5t14.5 -27t10.5 -8.5h832q3 0 10.5 8.5t14.5 27t7 40.5zM480 1152h448l-48 117q-7 9 -17 11h-317q-10 -2 -17 -11zM1408 1120v-64q0 -14 -9 -23t-23 -9h-96v-948q0 -83 -47 -143.5t-113 -60.5h-832 q-66 0 -113 58.5t-47 141.5v952h-96q-14 0 -23 9t-9 23v64q0 14 9 23t23 9h309l70 167q15 37 54 63t79 26h320q40 0 79 -26t54 -63l70 -167h309q14 0 23 -9t9 -23z"/></svg>
<div class="t mi" style="left:868.9px;top:448px;letter-spacing:0.111px">Eintrag löschen</div>
<svg class="ic" style="left:842.8px;top:486px" width="14.2" height="14.2" viewBox="0 -1536 1792 1792" aria-hidden="true"><path fill="#777" transform="scale(1,-1)" d="M896 1472q-169 0 -323 -66t-265.5 -177.5t-177.5 -265.5t-66 -323t66 -323t177.5 -265.5t265.5 -177.5t323 -66t323 66t265.5 177.5t177.5 265.5t66 323t-66 323t-177.5 265.5t-265.5 177.5t-323 66zM896 1536q182 0 348 -71t286 -191t191 -286t71 -348t-71 -348 t-191 -286t-286 -191t-348 -71t-348 71t-286 191t-191 286t-71 348t71 348t191 286t286 191t348 71zM496 704q16 0 16 -16v-480q0 -16 -16 -16h-32q-16 0 -16 16v480q0 16 16 16h32zM896 640q53 0 90.5 -37.5t37.5 -90.5q0 -35 -17.5 -64t-46.5 -46v-114q0 -14 -9 -23 t-23 -9h-64q-14 0 -23 9t-9 23v114q-29 17 -46.5 46t-17.5 64q0 53 37.5 90.5t90.5 37.5zM896 1408q209 0 385.5 -103t279.5 -279.5t103 -385.5t-103 -385.5t-279.5 -279.5t-385.5 -103t-385.5 103t-279.5 279.5t-103 385.5t103 385.5t279.5 279.5t385.5 103zM544 928v-96 q0 -14 9 -23t23 -9h64q14 0 23 9t9 23v96q0 93 65.5 158.5t158.5 65.5t158.5 -65.5t65.5 -158.5v-96q0 -14 9 -23t23 -9h64q14 0 23 9t9 23v96q0 146 -103 249t-249 103t-249 -103t-103 -249zM1408 192v512q0 26 -19 45t-45 19h-896q-26 0 -45 -19t-19 -45v-512 q0 -26 19 -45t45 -19h896q26 0 45 19t19 45z"/></svg>
<div class="t mi" style="left:869.4px;top:483px;letter-spacing:0.071px">Zertifikate verwalten (1)</div>
<svg class="ic" style="left:843.8px;top:521.9px" width="12.17" height="12.17" viewBox="0 -1408 1536 1536" aria-hidden="true"><path fill="#777" transform="scale(1,-1)" d="M768 1408q209 0 385.5 -103t279.5 -279.5t103 -385.5t-103 -385.5t-279.5 -279.5t-385.5 -103t-385.5 103t-279.5 279.5t-103 385.5t103 385.5t279.5 279.5t385.5 103zM896 161v190q0 14 -9 23.5t-22 9.5h-192q-13 0 -23 -10t-10 -23v-190q0 -13 10 -23t23 -10h192 q13 0 22 9.5t9 23.5zM894 505l18 621q0 12 -10 18q-10 8 -24 8h-220q-14 0 -24 -8q-10 -6 -10 -18l17 -621q0 -10 10 -17.5t24 -7.5h185q14 0 23.5 7.5t10.5 17.5z"/></svg>
<div class="t mi" style="left:868.9px;top:518px;letter-spacing:0.023px">Details zu diesem Eintrag</div>
<svg class="ic" style="left:843.9px;top:555px" width="12.26" height="14.3" viewBox="0 -1536 1536 1792" aria-hidden="true"><path fill="#777" transform="scale(1,-1)" d="M1024 1024v472q22 -14 36 -28l408 -408q14 -14 28 -36h-472zM896 992q0 -40 28 -68t68 -28h544v-1056q0 -40 -28 -68t-68 -28h-1344q-40 0 -68 28t-28 68v1600q0 40 28 68t68 28h800v-544z"/></svg>
<div class="t mi" style="left:868.9px;top:552px;letter-spacing:0.133px">Report als PDF erstellen</div>
</body>
</html>
